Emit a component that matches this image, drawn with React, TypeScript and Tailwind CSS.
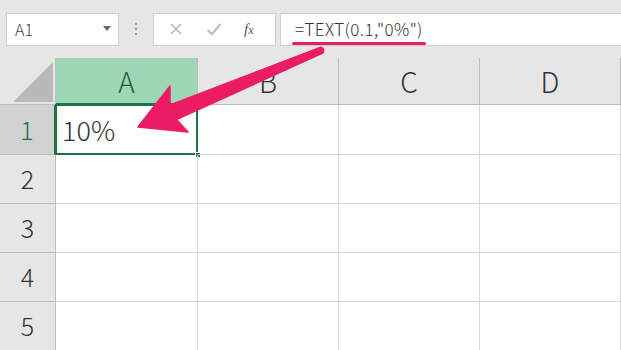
const font = { fontFamily: '"Noto Sans CJK JP", "Noto Sans", sans-serif' };

const cols = ["A", "B", "C", "D"];
const rows = [
  { n: 1, h: "h-[50px]" },
  { n: 2, h: "h-[49px]" },
  { n: 3, h: "h-[49px]" },
  { n: 4, h: "h-[49px]" },
  { n: 5, h: "h-[49px]" },
];

function FormulaBar() {
  return (
    <div className="flex items-center h-[58px] bg-[#e6e6e6] pl-[6px]">
      <div className="flex items-center justify-between w-[113px] h-[33px] bg-white border border-[#cfcfcf] pl-[8px] pr-[6px]">
        <span className="text-[16px] text-[#444] font-light">A1</span>
        <svg width="10" height="6" viewBox="0 0 10 6">
          <path d="M1 0 L9 0 L5 5 Z" fill="#666" />
        </svg>
      </div>
      <div className="w-[34px] flex flex-col items-center gap-[3px]">
        <span className="w-[2px] h-[2px] bg-[#999]" />
        <span className="w-[2px] h-[2px] bg-[#999]" />
        <span className="w-[2px] h-[2px] bg-[#999]" />
      </div>
      <div className="flex items-center w-[123px] h-[33px] bg-white border border-[#cfcfcf]">
        <svg width="14" height="14" viewBox="0 0 14 14" className="ml-[15px]">
          <path d="M2 2 L12 12 M12 2 L2 12" stroke="#b5b5b5" strokeWidth="1.5" />
        </svg>
        <svg width="16" height="14" viewBox="0 0 16 14" className="ml-[23px]">
          <path d="M1.5 8 L6 12 L14.5 2" stroke="#bdbdbd" strokeWidth="2.2" fill="none" />
        </svg>
        <span
          className="ml-[22px] text-[15px] italic text-[#555]"
          style={{ fontFamily: '"Liberation Serif", serif' }}
        >
          f<span className="text-[12px]">x</span>
        </span>
      </div>
      <div className="relative flex-1 h-[33px] bg-white border border-[#cfcfcf] border-r-0 ml-[4px] flex items-center pl-[14px]">
        <span className="text-[17px] text-[#333] font-light tracking-[0.4px]">=TEXT(0.1,"0%")</span>
        <div className="absolute left-[11px] top-[28px] w-[134px] h-[3px] rounded-full bg-[#ec1c64]" />
      </div>
    </div>
  );
}

function Arrow() {
  return (
    <svg className="absolute left-0 top-0 pointer-events-none" width="621" height="350" viewBox="0 0 621 350">
      <path
        d="M138 127 L170 86 L170 105 L320.8 47.2 Q324.5 48.5 323.2 52.8 L176.5 119.5 L188 132 Z"
        fill="#ec1c64"
        stroke="#ec1c64"
        strokeWidth="1.5"
        strokeLinejoin="round"
      />
    </svg>
  );
}

export default function App() {
  return (
    <div className="relative w-[621px] h-[350px] overflow-hidden bg-white" style={font}>
      <FormulaBar />
      <div className="grid grid-cols-[56px_142px_141px_141px_141px] font-light">
        {/* header row */}
        <div className="relative h-[47px] bg-[#e6e6e6] border-r border-b border-[#bdbdbd]">
          <svg className="absolute left-[13px] top-[4px]" width="40" height="40" viewBox="0 0 40 40">
            <path d="M0 40 L40 0 L40 40 Z" fill="#b9b9b9" />
          </svg>
        </div>
        {cols.map((c) => (
          <div
            key={c}
            className={
              c === "A"
                ? "h-[47px] flex items-center justify-center bg-[#9fd6b6] border-r border-[#bdbdbd] border-b-2 border-b-[#217346] text-[28px] text-[#1e5f3a]"
                : "h-[47px] flex items-center justify-center bg-[#e6e6e6] border-r border-b border-[#bdbdbd] text-[28px] text-[#333]"
            }
          >
            {c}
          </div>
        ))}

        {rows.map((r) => (
          <>
            <div
              key={"h" + r.n}
              className={
                r.n === 1
                  ? `${r.h} flex items-center justify-center bg-[#d2d2d2] border-r-2 border-r-[#217346] border-b border-[#bdbdbd] text-[25px] text-[#217346]`
                  : `${r.h} flex items-center justify-center bg-[#e6e6e6] border-r border-b border-[#bdbdbd] text-[25px] text-[#333]`
              }
            >
              {r.n}
            </div>
            {cols.map((c) => (
              <div key={c + r.n} className={`${r.h} relative border-r border-b border-[#d9d9d9]`}>
                {c === "A" && r.n === 1 && (
                  <>
                    <div className="absolute left-[-1px] top-[-1px] right-[-1px] bottom-[-1px] border-2 border-[#217346] flex items-center pl-[5px]">
                      <span className="text-[27px] text-[#333] leading-none">10%</span>
                    </div>
                    <div className="absolute right-[-4px] bottom-[-4px] w-[6px] h-[6px] bg-[#217346] border border-white" />
                  </>
                )}
              </div>
            ))}
          </>
        ))}
      </div>
      <Arrow />
    </div>
  );
}
